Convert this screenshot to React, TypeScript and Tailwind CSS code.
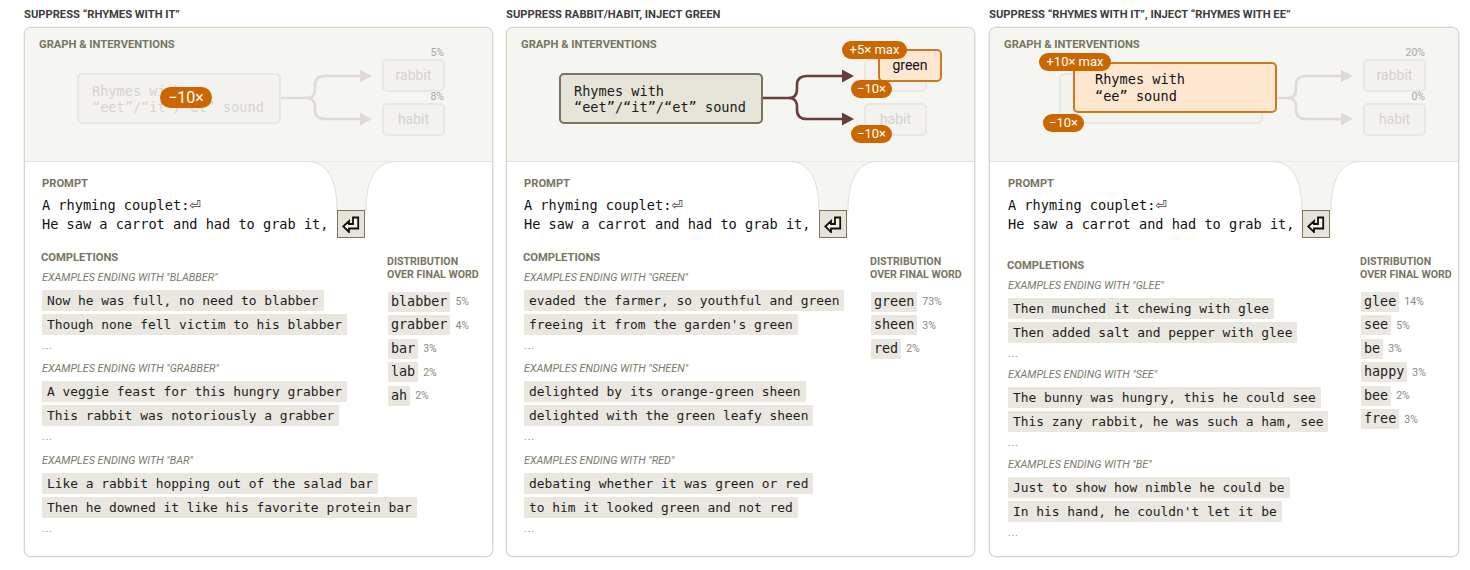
import React from "react";

type Group = { label: string; lines: string[] };
type Dist = [string, string];

function Badge({ text, left, top, w, h, big }: { text: string; left: number; top: number; w: number; h: number; big?: boolean }) {
  return (
    <div
      className={`absolute flex items-center justify-center rounded-full bg-[#cc6600] text-white whitespace-nowrap ${big ? "text-[16px]" : "text-[13px]"}`}
      style={{ left, top, width: w, height: h }}
    >
      {text}
    </div>
  );
}

function Arrows({ dx, dark }: { dx: number; dark: boolean }) {
  const c = dark ? "#6b3c3c" : "#e1d9d6";
  return (
    <svg className="absolute left-0 top-0" width="468" height="133" fill="none">
      <g transform={`translate(${dx} 0)`}>
        <path d="M256 70H282Q290 70 290 61V57Q290 48 300 48H336" stroke={c} strokeWidth="2.6" />
        <path d="M282 70Q290 70 290 79V82Q290 91 300 91H336" stroke={c} strokeWidth="2.6" />
        <path d="M335 41.5L347 48L335 54.5Z" fill={c} />
        <path d="M335 84.5L347 91L335 97.5Z" fill={c} />
      </g>
    </svg>
  );
}

function Word({ text, left, top, h, pct }: { text: string; left: number; top: number; h: number; pct?: string }) {
  return (
    <>
      {pct && (
        <div className="absolute w-[41px] text-right text-[10.5px] leading-[11px] text-[#a9a9a0]" style={{ left: left + 21, top: top - 12 }}>
          {pct}
        </div>
      )}
      <div
        className="absolute flex items-center justify-center rounded-[5px] border-2 border-[#e8e7e1] bg-[#f3f2ee] text-[14px] text-[#d4d3cb]"
        style={{ left, top, width: 63, height: h }}
      >
        {text}
      </div>
    </>
  );
}

function Node({ dark }: { dark: boolean }) {
  return (
    <div
      className={`absolute left-[52px] top-[45px] h-[51px] w-[204px] rounded-[5px] border-2 pl-[13px] pt-[8px] font-['DejaVu_Sans_Mono',monospace] text-[13.6px] leading-[16px] whitespace-nowrap ${
        dark ? "border-[#77745f] bg-[#e6e3d8] text-[#1a1a1a]" : "border-[#e8e7e1] bg-[#f3f2ee] text-[#d6d5cc]"
      }`}
    >
      <div>Rhymes with</div>
      <div>“eet”/“it”/“et” sound</div>
    </div>
  );
}

function ReturnIcon() {
  return (
    <svg width="18" height="17" viewBox="0 0 18 17" fill="none">
      <path d="M1.2 10.5L7 5V8H11V1.5H16.2V12.5H7V16Z" stroke="#111" strokeWidth="1.8" fill="#f4f2ea" />
    </svg>
  );
}

function Funnel() {
  return (
    <svg className="absolute left-[282px] top-[-1px]" width="90" height="52" fill="none">
      <path d="M0 .5C20 .5 30 18 30 50H59C59 18 69 .5 89 .5Z" fill="#f5f5f1" />
      <path d="M0 .5C20 .5 30 18 30 50M59 50C59 18 69 .5 89 .5" stroke="#dfdfd8" />
    </svg>
  );
}

function Card({
  title,
  graph,
  groups,
  dist,
  width,
  leftW,
  topPad,
  gap,
  pad,
}: {
  title: string;
  graph: React.ReactNode;
  groups: Group[];
  dist: Dist[];
  width: string;
  leftW: string;
  topPad: string;
  gap: string;
  pad: string;
}) {
  return (
    <div className={`${width} shrink-0`}>
      <div className="mb-[6px] text-[11.2px] font-bold leading-[12px] text-[#3c3c3a] whitespace-nowrap">{title}</div>
      <div className="h-[530px] overflow-hidden rounded-[7px] border border-[#d6d6cf] bg-white shadow-[0_0_0_0.5px_#e2e2dc]">
        <div className="relative z-0 h-[134px] border-b border-[#e2e2da] bg-[#f5f5f1] pl-[14px] pt-[11px]">
          <div className="text-[11.2px] font-bold leading-[12px] text-[#77755f]">GRAPH &amp; INTERVENTIONS</div>
          {graph}
        </div>
        <div className={`relative ${pad} pt-[16px]`}>
          <Funnel />
          <div className="absolute left-[312px] top-[48px] flex h-[28px] w-[28px] items-center justify-center border border-[#77745f] bg-[#e6e3d8]">
            <ReturnIcon />
          </div>
          <div className="relative text-[11.2px] font-bold leading-[12px] text-[#77755f]">PROMPT</div>
          <div className="relative mt-[6px] font-['DejaVu_Sans_Mono',monospace] text-[13.6px] leading-[18.8px] text-[#111] whitespace-nowrap">
            <div>
              A rhyming couplet:<span className="font-['DejaVu_Sans',sans-serif] text-[14px] leading-[14px] text-[#444]">⏎</span>
            </div>
            <div>He saw a carrot and had to grab it,</div>
          </div>
          <div className="mt-[18px] flex">
            <div className={`${leftW} shrink-0 ${topPad}`}>
              <div className="ml-[-1px] text-[11.2px] font-bold leading-[12px] text-[#77755f]">COMPLETIONS</div>
              <div className="mt-[8px]">
                {groups.map((g) => (
                  <div key={g.label} className={gap}>
                    <div className="text-[10.8px] italic leading-[12px] text-[#7c7a6c] whitespace-nowrap">{g.label}</div>
                    <div className="mt-[6px] flex flex-col items-start gap-[3px]">
                      {g.lines.map((l) => (
                        <div
                          key={l}
                          className="h-[21px] whitespace-nowrap rounded-[1px] bg-[#e9e7e0] px-[5px] font-['DejaVu_Sans_Mono',monospace] text-[12.9px] leading-[21px] text-[#1d1d1b]"
                        >
                          {l}
                        </div>
                      ))}
                    </div>
                    <div className="mt-[5px] text-[10px] leading-[12px] tracking-[1px] text-[#8a8a80]">...</div>
                  </div>
                ))}
              </div>
            </div>
            <div className="pt-[3px]">
              <div className="text-[10.6px] font-bold leading-[13px] text-[#77755f] whitespace-nowrap">
                DISTRIBUTION
                <br />
                OVER FINAL WORD
              </div>
              <div className="ml-px mt-[11.4px] flex flex-col gap-[3.5px]">
                {dist.map(([w, p]) => (
                  <div key={w} className="flex items-center gap-[5px]">
                    <div className="h-[20px] rounded-[1px] bg-[#e9e7e0] px-[3px] font-['DejaVu_Sans_Mono',monospace] text-[13.4px] leading-[20px] text-[#1d1d1b]">
                      {w}
                    </div>
                    <div className="text-[10.5px] text-[#8a8a80]">{p}</div>
                  </div>
                ))}
              </div>
            </div>
          </div>
        </div>
      </div>
    </div>
  );
}

export default function App() {
  return (
    <div className="flex h-[570px] w-[1470px] gap-[13px] overflow-hidden bg-white pl-[24px] pt-[9px] font-['Roboto',sans-serif]">
      <Card
        title="SUPPRESS “RHYMES WITH IT”"
        width="w-[469px]"
        leftW="w-[345px]"
        topPad=""
        gap="mb-[11.5px]"
        pad="pl-[17px]"
        graph={
          <>
            <Node dark={false} />
            <Arrows dx={0} dark={false} />
            <Word text="rabbit" left={357} top={31} h={33} pct="5%" />
            <Word text="habit" left={357} top={75} h={33} pct="8%" />
            <Badge text="−10×" left={135} top={59} w={52} h={21} big />
          </>
        }
        groups={[
          { label: "EXAMPLES ENDING WITH \"BLABBER\"", lines: ["Now he was full, no need to blabber", "Though none fell victim to his blabber"] },
          { label: "EXAMPLES ENDING WITH \"GRABBER\"", lines: ["A veggie feast for this hungry grabber", "This rabbit was notoriously a grabber"] },
          { label: "EXAMPLES ENDING WITH \"BAR\"", lines: ["Like a rabbit hopping out of the salad bar", "Then he downed it like his favorite protein bar"] },
        ]}
        dist={[
          ["blabber", "5%"],
          ["grabber", "4%"],
          ["bar", "3%"],
          ["lab", "2%"],
          ["ah", "2%"],
        ]}
      />
      <Card
        title="SUPPRESS RABBIT/HABIT, INJECT GREEN"
        width="w-[469px]"
        leftW="w-[346px]"
        topPad=""
        gap="mb-[11.5px]"
        pad="pl-[17px]"
        graph={
          <>
            <Node dark />
            <Arrows dx={0} dark />
            <Word text="" left={357} top={31} h={33} />
            <Word text="habit" left={357} top={75} h={33} />
            <div className="absolute left-[371px] top-[21px] flex h-[33px] w-[64px] items-center justify-center rounded-[5px] border-2 border-[#d0781e] bg-[#ffe6d0] text-[14px] text-[#111]">
              green
            </div>
            <Badge text="+5× max" left={335} top={13} w={65} h={18} />
            <Badge text="−10×" left={344} top={52} w={41} h={18} />
            <Badge text="−10×" left={344} top={97} w={41} h={18} />
          </>
        }
        groups={[
          { label: "EXAMPLES ENDING WITH \"GREEN\"", lines: ["evaded the farmer, so youthful and green", "freeing it from the garden's green"] },
          { label: "EXAMPLES ENDING WITH \"SHEEN\"", lines: ["delighted by its orange-green sheen", "delighted with the green leafy sheen"] },
          { label: "EXAMPLES ENDING WITH \"RED\"", lines: ["debating whether it was green or red", "to him it looked green and not red"] },
        ]}
        dist={[
          ["green", "73%"],
          ["sheen", "3%"],
          ["red", "2%"],
        ]}
      />
      <div className="ml-px">
        <Card
          title="SUPPRESS “RHYMES WITH IT”, INJECT “RHYMES WITH EE”"
          width="w-[470px]"
          leftW="w-[352px]"
          topPad="pt-[8px]"
          gap="mb-[9.5px]"
          pad="pl-[18px]"
          graph={
            <>
              <div className="absolute left-[69px] top-[45px] h-[51px] w-[204px] rounded-[5px] border-2 border-[#e8e7e1] bg-[#f3f2ee]" />
              <Arrows dx={16} dark={false} />
              <Word text="rabbit" left={373} top={31} h={33} pct="20%" />
              <Word text="habit" left={373} top={75} h={33} pct="0%" />
              <div className="absolute left-[83px] top-[34px] h-[51px] w-[204px] rounded-[5px] border-2 border-[#d0781e] bg-[#ffe6d0] pl-[20px] pt-[7px] font-['DejaVu_Sans_Mono',monospace] text-[13.6px] leading-[17px] text-[#111]">
                <div>Rhymes with</div>
                <div>“ee” sound</div>
              </div>
              <Badge text="+10× max" left={49} top={25} w={72} h={18} />
              <Badge text="−10×" left={53} top={86} w={41} h={18} />
            </>
          }
          groups={[
            { label: "EXAMPLES ENDING WITH \"GLEE\"", lines: ["Then munched it chewing with glee", "Then added salt and pepper with glee"] },
            { label: "EXAMPLES ENDING WITH \"SEE\"", lines: ["The bunny was hungry, this he could see", "This zany rabbit, he was such a ham, see"] },
            { label: "EXAMPLES ENDING WITH \"BE\"", lines: ["Just to show how nimble he could be", "In his hand, he couldn't let it be"] },
          ]}
          dist={[
            ["glee", "14%"],
            ["see", "5%"],
            ["be", "3%"],
            ["happy", "3%"],
            ["bee", "2%"],
            ["free", "3%"],
          ]}
        />
      </div>
    </div>
  );
}
